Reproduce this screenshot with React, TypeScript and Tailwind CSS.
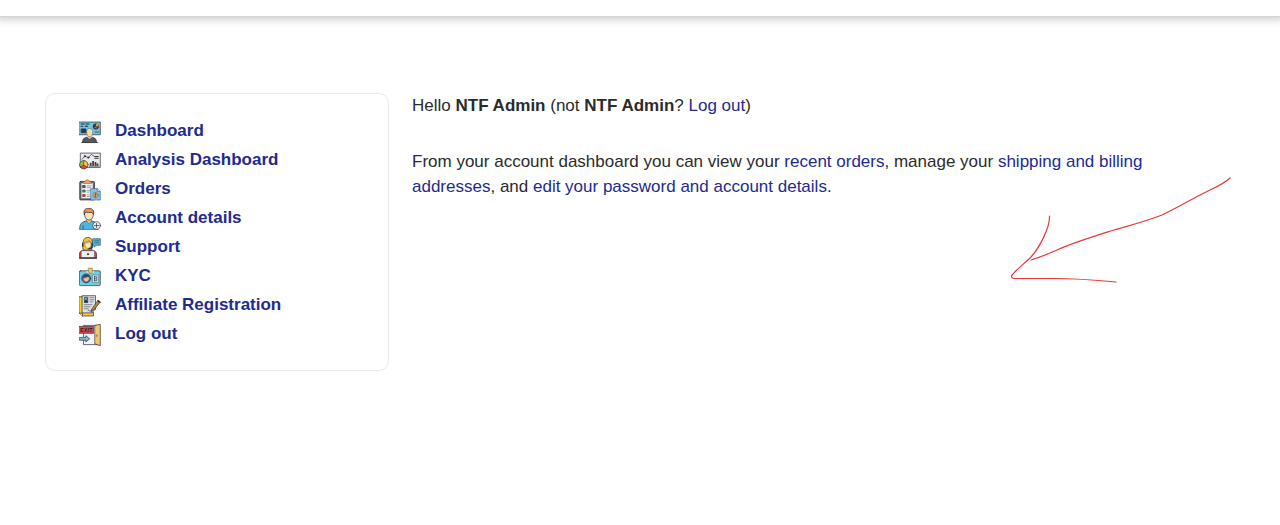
import type { ReactNode } from 'react';

function Icon({ children }: { children: ReactNode }) {
  return (
    <svg
      viewBox="1 1 64 64"
      className="mt-[3px] w-[22px] h-[22px] shrink-0"
      fill="none"
      stroke="#2d2d33"
      strokeWidth="2"
      strokeLinejoin="round"
      strokeLinecap="round"
      aria-hidden="true"
    >
      {children}
    </svg>
  );
}

function DashboardIcon() {
  return (
    <Icon>
      <rect x="2" y="4" width="61" height="37" fill="#6cc4e8" />
      <path d="M7 10h9M21 10h9M7 16h5M19 16h7" strokeWidth="3" />
      <path d="M8 24h13v11H8z" fill="#253746" />
      <circle cx="50" cy="17" r="8" fill="#253746" />
      <path d="M50 9a8 8 0 0 1 8 8h-8z" fill="#f0a030" stroke="none" />
      <path d="M44 21l6-4 4 6z" fill="#e4573d" stroke="none" />
      <path d="M48 33h10" />
      <path d="M11 64c0-10 4-15 14-16h13c10 1 14 6 14 16z" fill="#55565e" />
      <path d="M26 42h12v7l-6 4-6-4z" fill="#eac28f" stroke="none" />
      <path d="M23 33c0-8 4-10 9-10s9 2 9 10-4 14-9 14-9-6-9-14z" fill="#f6dcae" strokeWidth="1" />
      <path d="M8 64h48" />
    </Icon>
  );
}

function AnalysisIcon() {
  return (
    <Icon>
      <rect x="6" y="10" width="57" height="42" fill="#e9eaec" />
      <path d="M10 28l8-9 10 4 9-9 8 5" />
      <circle cx="18" cy="19" r="2" fill="#2d2d33" />
      <circle cx="28" cy="23" r="2" fill="#2d2d33" />
      <path d="M47 20h10M47 25h10" strokeWidth="3" />
      <path d="M35 47V38M42 47V33M49 47V36M55 47v-7" stroke="#4a3434" strokeWidth="5" strokeLinecap="butt" />
      <path d="M31 48h28" />
      <circle cx="15" cy="44" r="12" fill="#e5493a" />
      <path d="M15 44V32a12 12 0 0 0-11 17z" fill="#8bc34a" strokeWidth="1" />
      <path d="M15 44V32a12 12 0 0 1 10 18z" fill="#f8c83c" strokeWidth="1" />
    </Icon>
  );
}

function OrdersIcon() {
  return (
    <Icon>
      <rect x="3" y="8" width="43" height="54" rx="3" fill="#65686e" />
      <rect x="8" y="13" width="33" height="44" fill="#f3f3f4" stroke="none" />
      <path d="M13 8h6c1-6 11-6 12 0h6v6H13z" fill="#f0a274" strokeWidth="1" />
      <path d="M12 20h7v6h-7z" fill="#5a636c" />
      <path d="M12 33h7v6h-7z" fill="#2f9a78" stroke="#266553" />
      <path d="M12 46h7v6h-7z" fill="#c73e55" stroke="#80303f" />
      <path d="M25 21h11M25 26h9M25 34h9M25 39h6M25 47h6M25 52h6" stroke="#777a80" />
      <path d="M36 29h18l9 8v25H36z" fill="#86c0ee" stroke="#3c6a94" />
      <path d="M54 29v8h9" fill="#d5ebfb" stroke="#3c6a94" />
      <circle cx="49" cy="48" r="8" fill="#e9b54e" strokeWidth="1" />
      <path d="M52 45c-5-3-7 2-3 3s2 6-3 3M49 42v12" stroke="#6e5424" />
    </Icon>
  );
}

function AccountIcon() {
  return (
    <Icon>
      <path d="M3 63c0-13 3-19 12-22l9-3h12l9 3c9 3 11 9 11 22z" fill="#4fb6e0" />
      <path d="M23 31h14v8l-7 7-7-7z" fill="#f0c896" strokeWidth="1" />
      <path d="M17 17c0-8 4-11 13-11s13 3 13 11c0 11-5 19-13 19s-13-8-13-19z" fill="#fbe3bd" />
      <path d="M16 20C13 7 19 2 29 2c11 0 17 6 14 18l-4-6c-7 1-14 0-19-1z" fill="#ef9049" />
      <path d="M13 62v-9" />
      <circle cx="52" cy="52" r="11" fill="#e9f3f9" />
      <path d="M52 46v12M46 52h12" />
    </Icon>
  );
}

function SupportIcon() {
  return (
    <Icon>
      <path d="M13 38c-2-9-2-17 0-24C15 5 21 2 27 2s12 4 13 12c1 7 0 16-2 24z" fill="#f5c13c" />
      <path d="M18 15h18v8c0 7-4 11-9 11s-9-4-9-11z" fill="#fbe5c6" strokeWidth="1" />
      <path d="M18 19c7-1 10-3 12-8l6 8" fill="#f5c13c" strokeWidth="1" />
      <path d="M12 20v8M39 20v8c0 4-4 7-9 7" strokeWidth="4" />
      <path d="M42 6h21v19H51l-6 6v-6h-3z" fill="#54b6db" stroke="#28576d" />
      <path d="M47 12h11M47 18h11" stroke="#28576d" />
      <path d="M2 63V52c0-8 5-11 10-12h29c6 1 11 4 11 12v11z" fill="#dd4337" />
      <path d="M8 41h38v20H8z" fill="#eeeff1" strokeWidth="1" />
      <path d="M4 62h46" strokeWidth="3" />
      <circle cx="27" cy="51" r="2" fill="#2d2d33" />
    </Icon>
  );
}

function KycIcon() {
  return (
    <Icon>
      <rect x="2" y="15" width="61" height="43" rx="3" fill="#6bceed" />
      <path d="M24 18h19" stroke="#f7fcff" strokeWidth="4" />
      <path d="M29 7h11v12l-5 4-6-4z" fill="#f7c945" strokeWidth="1" />
      <circle cx="22" cy="37" r="13" fill="#477b99" />
      <path d="M13 36c5 0 11-1 15-5l3 5c0 7-4 11-9 11s-9-4-9-11z" fill="#f4bba6" strokeWidth="1" />
      <path d="M13 33c2-9 15-9 18 0l-8-2z" fill="#333944" stroke="none" />
      <rect x="41" y="27" width="17" height="22" fill="#c9edf6" strokeWidth="1" />
      <path d="M46 32h6M46 38h6M46 44h6M46 32v12M53 34v2M53 40v2" />
    </Icon>
  );
}

function AffiliateIcon() {
  return (
    <Icon>
      <path d="M2 6h12v44h29v12H11l-9-8z" fill="#f3cf30" />
      <path d="M2 54h9v8" fill="#fff0a0" />
      <path d="M11 3h38v39L39 53H11z" fill="#dfe2e7" />
      <path d="M15 6h13v17H15z" fill="#3378ad" stroke="none" />
      <circle cx="21" cy="12" r="4" fill="#e69c5f" strokeWidth="1" />
      <path d="M17 22c0-7 9-7 9 0z" fill="#25303e" />
      <path d="M33 9h11M33 15h11M33 21h8M16 29h23M16 35h18M16 41h12" stroke="#5b5e66" />
      <path d="M39 53V42h10" fill="#fff" />
      <path d="M57 17l6 4-19 24-8 4 3-8z" fill="#bd8732" />
      <path d="M56 18l6 4" strokeWidth="4" />
      <path d="M27 47c4-6 4 5 9 0" />
    </Icon>
  );
}

function ExitIcon() {
  return (
    <Icon>
      <path d="M14 5h46v56H14V49M14 38V25" fill="#f2f3f5" />
      <path d="M48 5l15-3v62l-15-5z" fill="#f8c66a" />
      <path d="M53 33v4" />
      <rect x="2" y="8" width="41" height="20" fill="#e5494b" />
      <text
        x="22"
        y="24"
        textAnchor="middle"
        fontSize="16"
        fontWeight="bold"
        fontFamily="Liberation Sans, sans-serif"
        fill="#2d2225"
        stroke="none"
      >
        EXIT
      </text>
      <path d="M3 40h18v-5l11 9-11 9v-5H3z" fill="#80bddd" />
    </Icon>
  );
}

const menuItems = [
  { label: 'Dashboard', icon: DashboardIcon },
  { label: 'Analysis Dashboard', icon: AnalysisIcon },
  { label: 'Orders', icon: OrdersIcon },
  { label: 'Account details', icon: AccountIcon },
  { label: 'Support', icon: SupportIcon },
  { label: 'KYC', icon: KycIcon },
  { label: 'Affiliate Registration', icon: AffiliateIcon },
  { label: 'Log out', icon: ExitIcon },
];

function TextLink({ children }: { children: ReactNode }) {
  return (
    <a href="#" className="text-[#212b8f] hover:underline">
      {children}
    </a>
  );
}

export default function App() {
  return (
    <div className="relative min-h-screen bg-white font-['Liberation_Sans',Arial,sans-serif] text-[#2b2b2b]">
      <header className="h-[17px] border-b border-[#d6d6d6] shadow-[0_-2px_10px_4px_rgba(0,0,0,0.22)]" />

      <div className="flex items-start gap-[23px] px-[45px] pt-[76px] pb-16">
        {/* Account menu */}
        <nav className="w-[344px] shrink-0 rounded-[10px] border border-[#e9e9e9] py-[22px] pl-[33px] pr-8">
          <ul>
            {menuItems.map(({ label, icon: ItemIcon }) => (
              <li key={label}>
                <a
                  href="#"
                  className="flex h-[29px] items-center gap-[14px] text-[17px] font-bold text-[#212b8f] hover:underline"
                >
                  <ItemIcon />
                  {label}
                </a>
              </li>
            ))}
          </ul>
        </nav>

        {/* Welcome text */}
        <main className="max-w-[780px] flex-1 text-[17px] leading-[25px]">
          <p className="mb-[31px]">
            Hello <strong>NTF Admin</strong> (not <strong>NTF Admin</strong>? <TextLink>Log out</TextLink>)
          </p>
          <p>
            From your account dashboard you can view your <TextLink>recent orders</TextLink>, manage your{' '}
            <TextLink>shipping and billing addresses</TextLink>, and{' '}
            <TextLink>edit your password and account details</TextLink>.
          </p>
        </main>
      </div>

      {/* Hand-drawn arrow */}
      <svg
        viewBox="0 0 240 120"
        className="pointer-events-none absolute left-[1000px] top-[170px] w-[240px] h-[120px]"
        fill="none"
        stroke="#ed3737"
        strokeWidth="1.2"
        strokeLinecap="round"
        strokeLinejoin="round"
        aria-hidden="true"
      >
        <path d="M230 8C224 14 214 18 204 23C190 30 177 38 162 45C147 51 131 55 114 60C95 66 75 72 57 80C48 84 41 87 31 90" />
        <path d="M49.500 46C50 57 40 77 31 87C25 93 17 99 13 104C10 107 12 108.500 15 108.500H55C75 108.500 95 110 116 112" />
      </svg>
    </div>
  );
}
